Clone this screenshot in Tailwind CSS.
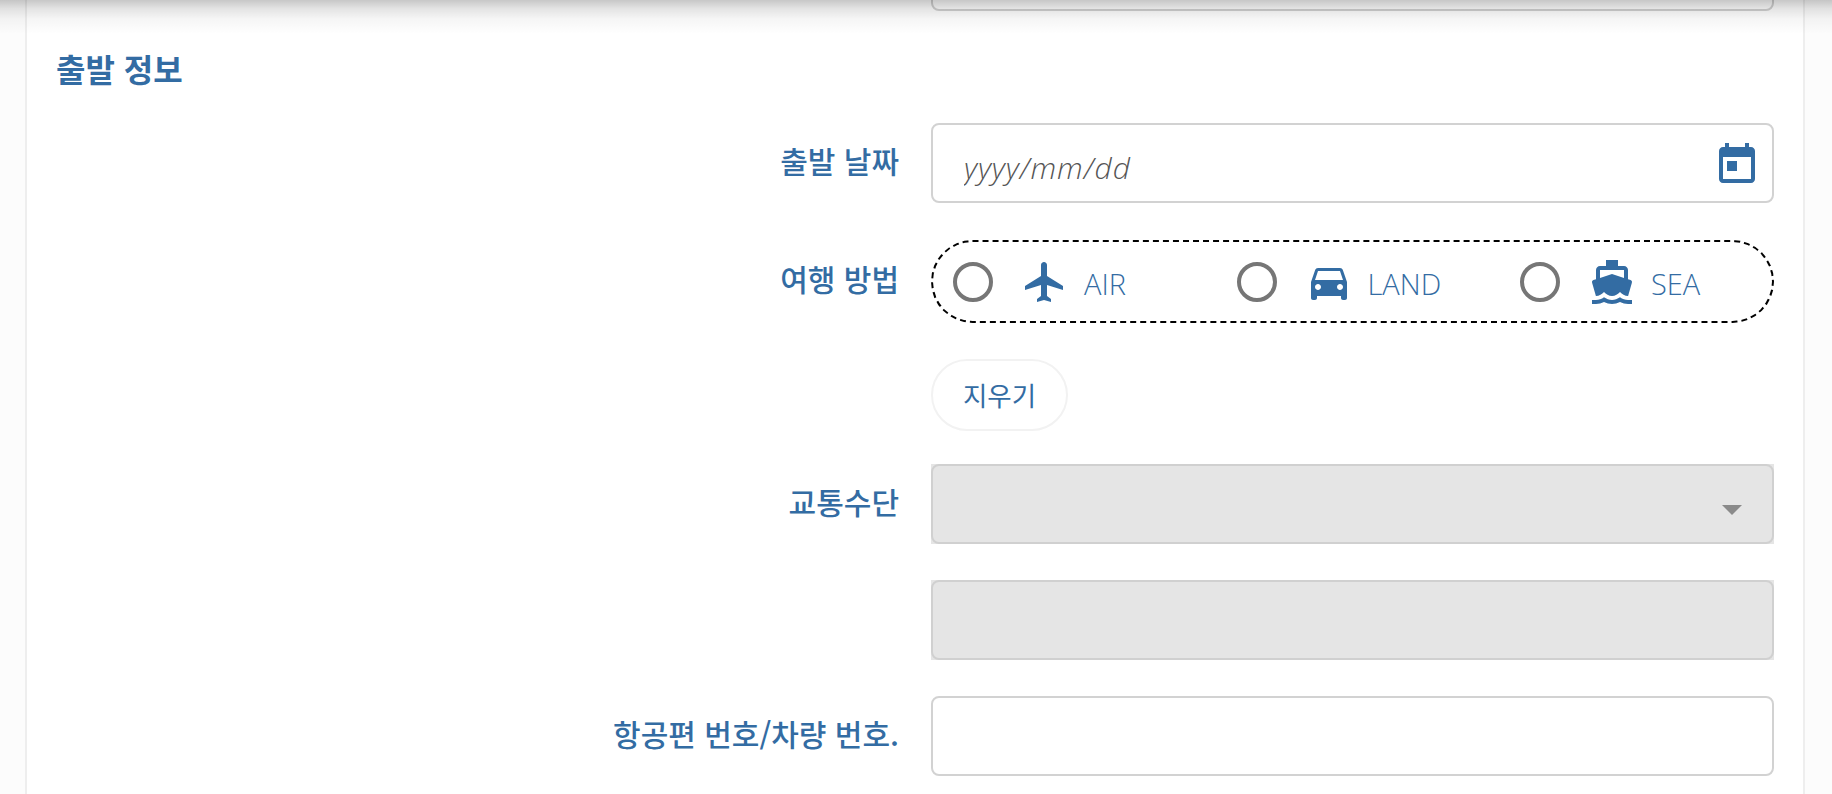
<!DOCTYPE html>
<html lang="ko">
<head>
  <meta charset="UTF-8">
  <title>출발 정보</title>
  <script src="https://cdn.jsdelivr.net/npm/@tailwindcss/browser@4"></script>
</head>
<body class="relative h-screen overflow-hidden bg-[#fcfcfc] font-['Open_Sans','Noto_Sans_CJK_KR',sans-serif] text-[#336ca3]">

  <!-- shadow from the sticky header above -->
  <div class="absolute inset-x-0 top-0 z-10 h-[34px] bg-[linear-gradient(to_bottom,rgba(0,0,0,0.22)_0%,rgba(0,0,0,0.11)_25%,rgba(0,0,0,0.04)_55%,rgba(0,0,0,0)_100%)]"></div>

  <main class="ml-[25px] flow-root h-full w-[1780px] border-x-2 border-[#eeeeee] bg-white">
    <!-- field cut off by the header -->
    <div class="ml-[904px] -mt-[69px] h-[80px] w-[843px] rounded-lg border-2 border-[#d2d2d2]"></div>

    <h2 class="ml-[29px] mt-[39px] mb-[1px] h-[36px] text-[32px] leading-[36px] font-bold font-['Noto_Sans_CJK_KR',sans-serif]">출발 정보</h2>

    <!-- date -->
    <div class="mt-[37px] flex items-center">
      <label class="w-[872px] pb-[5px] text-right text-[30px] font-medium font-['Noto_Sans_CJK_KR',sans-serif]">출발 날짜</label>
      <div class="relative ml-[32px] h-[80px] w-[843px]">
        <input type="text" placeholder="yyyy/mm/dd" class="h-full w-full rounded-lg border-2 border-[#d2d2d2] bg-white pl-[31px] pt-[8px] text-[30px] font-light tracking-[1px] placeholder:italic placeholder:text-[#555555]">
        <svg class="absolute right-[13px] top-[18px] h-[48px] w-[48px] fill-current" viewBox="0 0 24 24"><path d="M12 10H7v5h5v-5zM16 1v2H8V1H6v2H5c-1.11 0-1.99.9-1.99 2L3 19c0 1.1.89 2 2 2h14c1.1 0 2-.9 2-2V5c0-1.1-.9-2-2-2h-1V1h-2zm3 18H5V8h14v11z"/></svg>
      </div>
    </div>

    <!-- travel mode -->
    <div class="mt-[37px] flex items-center">
      <label class="w-[872px] pb-[6px] text-right text-[30px] font-medium font-['Noto_Sans_CJK_KR',sans-serif]">여행 방법</label>
      <div class="ml-[32px] grid h-[83px] w-[843px] grid-cols-[283.5px_283.5px_1fr] items-center rounded-full border-2 border-dashed border-black pl-[20px] text-[29px] font-light">
        <label class="flex items-center">
          <input type="radio" name="mode" class="h-10 w-10 appearance-none rounded-full border-4 border-[#767676]">
          <svg class="ml-[28px] h-12 w-12 fill-current" viewBox="0 0 24 24"><path d="M21 16v-2l-8-5V3.5c0-.83-.67-1.5-1.5-1.5S10 2.67 10 3.5V9l-8 5v2l8-2.5V19l-2 1.5V22l3.5-1 3.5 1v-1.5L13 19v-5.5l8 2.5z"/></svg>
          <span class="ml-[15px] pt-[4px]">AIR</span>
        </label>
        <label class="flex items-center">
          <input type="radio" name="mode" class="h-10 w-10 appearance-none rounded-full border-4 border-[#767676]">
          <svg class="ml-[28px] h-12 w-12 fill-current" viewBox="0 0 24 24"><path d="M18.92 6.01C18.72 5.42 18.16 5 17.5 5h-11c-.66 0-1.21.42-1.42 1.01L3 12v8c0 .55.45 1 1 1h1c.55 0 1-.45 1-1v-1h12v1c0 .55.45 1 1 1h1c.55 0 1-.45 1-1v-8l-2.08-5.99zM6.5 16c-.83 0-1.5-.67-1.5-1.5S5.67 13 6.5 13s1.5.67 1.5 1.5S7.33 16 6.5 16zm11 0c-.83 0-1.5-.67-1.5-1.5s.67-1.5 1.5-1.5 1.5.67 1.5 1.5-.67 1.5-1.5 1.5zM5 11l1.5-4.5h11L19 11H5z"/></svg>
          <span class="ml-[15px] pt-[4px]">LAND</span>
        </label>
        <label class="flex items-center">
          <input type="radio" name="mode" class="h-10 w-10 appearance-none rounded-full border-4 border-[#767676]">
          <svg class="ml-[28px] h-12 w-12 fill-current" viewBox="0 0 24 24"><path d="M20 21c-1.39 0-2.78-.47-4-1.32-2.44 1.71-5.56 1.71-8 0C6.78 20.53 5.39 21 4 21H2v2h2c1.38 0 2.74-.35 4-.99 2.52 1.29 5.48 1.29 8 0 1.26.65 2.62.99 4 .99h2v-2h-2zM3.95 19H4c1.6 0 3.02-.88 4-2 .98 1.12 2.4 2 4 2s3.02-.88 4-2c.98 1.12 2.4 2 4 2h.05l1.89-6.68c.08-.26.06-.54-.06-.78s-.34-.42-.6-.5L20 10.62V6c0-1.1-.9-2-2-2h-3V1H9v3H6c-1.1 0-2 .9-2 2v4.62l-1.29.42c-.26.08-.48.26-.6.5s-.15.52-.06.78L3.95 19zM6 6h12v3.97L12 8 6 9.97V6z"/></svg>
          <span class="ml-[15px] pt-[4px]">SEA</span>
        </label>
      </div>
    </div>

    <!-- clear -->
    <button type="button" class="ml-[904px] mt-[36px] block h-[72px] w-[137px] rounded-full border-2 border-[#f2f2f2] bg-white text-[26.5px] font-['Noto_Sans_CJK_KR',sans-serif]">지우기</button>

    <!-- transport -->
    <div class="mt-[33px] flex items-center">
      <label class="w-[872px] pb-[6px] text-right text-[30px] font-medium font-['Noto_Sans_CJK_KR',sans-serif]">교통수단</label>
      <div class="relative ml-[32px] h-[80px] w-[843px] bg-[#e5e5e5]">
        <select disabled class="h-full w-full appearance-none rounded-lg border-2 border-[#d0d0d0] bg-[#e5e5e5]"></select>
        <svg class="absolute right-[32px] top-[41px] h-[10px] w-[20px] fill-[#8a8a8a]" viewBox="0 0 20 10"><path d="M0 0h20L10 10z"/></svg>
      </div>
    </div>

    <div class="ml-[904px] mt-[36px] h-[80px] w-[843px] bg-[#e5e5e5]">
      <input type="text" disabled class="h-full w-full rounded-lg border-2 border-[#d0d0d0] bg-[#e5e5e5]">
    </div>

    <!-- flight / vehicle number -->
    <div class="mt-[36px] flex items-center">
      <label class="w-[872px] pb-[5px] text-right text-[30px] font-medium font-['Noto_Sans_CJK_KR',sans-serif]">항공편 번호/차량 번호.</label>
      <input type="text" class="ml-[32px] h-[80px] w-[843px] rounded-lg border-2 border-[#d2d2d2] bg-white">
    </div>
  </main>
</body>
</html>
